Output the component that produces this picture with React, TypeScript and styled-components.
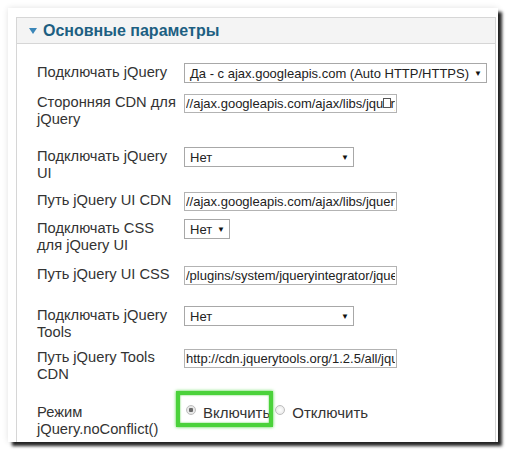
import styled, { createGlobalStyle } from 'styled-components'

const GlobalStyle = createGlobalStyle`
  body {
    margin: 0;
    background: #ffffff;
    font-family: 'Liberation Sans', Arial, sans-serif;
  }
`

interface Field {
  label: React.ReactNode
  height: number
  control: React.ReactNode
}

const fields: Field[] = [
  {
    label: 'Подключать jQuery',
    height: 30,
    control: <Select $width={303} value="Да - с ajax.googleapis.com (Auto HTTP/HTTPS)" />,
  },
  {
    label: (
      <>
        Сторонняя CDN для
        <br />
        jQuery
      </>
    ),
    height: 54,
    control: <TextInput value="//ajax.googleapis.com/ajax/libs/jquery/1.7/jquery.min.js" $marker />,
  },
  {
    label: (
      <>
        Подключать jQuery
        <br />
        UI
      </>
    ),
    height: 44,
    control: <Select $width={170} value="Нет" />,
  },
  {
    label: 'Путь jQuery UI CDN',
    height: 28,
    control: <TextInput value="//ajax.googleapis.com/ajax/libs/jqueryui/1.8/jquery-ui.min.js" />,
  },
  {
    label: (
      <>
        Подключать CSS
        <br />
        для jQuery UI
      </>
    ),
    height: 46,
    control: <Select $width={46} value="Нет" />,
  },
  {
    label: 'Путь jQuery UI CSS',
    height: 41,
    control: <TextInput value="/plugins/system/jqueryintegrator/jquery-ui.css" />,
  },
  {
    label: (
      <>
        Подключать jQuery
        <br />
        Tools
      </>
    ),
    height: 42,
    control: <Select $width={170} value="Нет" />,
  },
  {
    label: (
      <>
        Путь jQuery Tools
        <br />
        CDN
      </>
    ),
    height: 55,
    control: <TextInput value="http://cdn.jquerytools.org/1.2.5/all/jquery.tools.min.js" />,
  },
]

function Select(props: { value: string; $width: number }) {
  return (
    <SelectBox $width={props.$width}>
      <SelectText>{props.value}</SelectText>
      <Arrow>▼</Arrow>
    </SelectBox>
  )
}

function TextInput(props: { value: string; $marker?: boolean }) {
  return (
    <InputWrap>
      <Input readOnly value={props.value} />
      {props.$marker && <Marker />}
    </InputWrap>
  )
}

export default function App() {
  return (
    <>
      <GlobalStyle />
      <Page>
        <Shot>
          <Panel>
            <Header>
              <svg width="8" height="6" viewBox="0 0 8 6">
                <path d="M0 0 H8 L4 6 Z" fill="#3b86b8" />
              </svg>
              <Title>Основные параметры</Title>
            </Header>
            <Body>
              {fields.map((field, i) => (
                <Row key={i} $height={field.height}>
                  <Label>{field.label}</Label>
                  {field.control}
                </Row>
              ))}
              <Row $height={40}>
                <Label>
                  Режим
                  <br />
                  jQuery.noConflict()
                </Label>
                <RadioGroup>
                  <Option>
                    <Radio $checked />
                    <span>Включить</span>
                    <Highlight />
                  </Option>
                  <Option>
                    <Radio />
                    <span>Отключить</span>
                  </Option>
                </RadioGroup>
              </Row>
            </Body>
          </Panel>
        </Shot>
      </Page>
    </>
  )
}

const Page = styled.div`
  padding: 8px;
`
const Shot = styled.div`
  box-sizing: border-box;
  width: 490px;
  height: 434px;
  padding: 9px 2px 0 8px;
  background: #ffffff;
  overflow: hidden;
  box-shadow: 4px 4px 3px rgba(0, 0, 0, 0.85), 0 0 6px rgba(0, 0, 0, 0.12);
`
const Panel = styled.div`
  box-sizing: border-box;
  height: 432px;
  border: 1px solid #d6d6d6;
`
const Header = styled.div`
  display: flex;
  align-items: center;
  gap: 6px;
  height: 25px;
  padding-left: 12px;
  background: #f4f4f4;
  border-bottom: 1px solid #d6d6d6;
`
const Title = styled.h3`
  margin: 0;
  font-size: 16px;
  font-weight: bold;
  color: #1d5f82;
`
const Body = styled.div`
  display: flex;
  flex-direction: column;
  padding: 20px 0 0 20px;
`
const Row = styled.div<{ $height: number }>`
  display: flex;
  align-items: flex-start;
  min-height: ${(p) => p.$height}px;
`
const Label = styled.div`
  width: 147px;
  flex-shrink: 0;
  font-size: 14.7px;
  line-height: 17px;
  color: #333333;
`
const SelectBox = styled.div<{ $width: number }>`
  box-sizing: border-box;
  display: flex;
  align-items: center;
  justify-content: space-between;
  width: ${(p) => p.$width}px;
  height: 20px;
  margin-top: -1px;
  padding: 0 4px 0 5px;
  border: 1px solid #a8a8a8;
  background: #ffffff;
  font-size: 13px;
  color: #222222;
`
const SelectText = styled.span`
  white-space: nowrap;
`
const Arrow = styled.span`
  font-size: 8px;
  color: #111111;
`
const InputWrap = styled.div`
  position: relative;
  display: flex;
`
const Input = styled.input`
  box-sizing: border-box;
  width: 213px;
  height: 19px;
  margin: 0;
  padding: 0 1px;
  border: 1px solid #b3b3b3;
  font-family: 'Liberation Sans', Arial, sans-serif;
  font-size: 13px;
  color: #222222;
  outline: none;
`
const Marker = styled.span`
  position: absolute;
  right: 6px;
  top: 4px;
  width: 6px;
  height: 8px;
  border: 1px solid #555555;
  background: #ffffff;
`
const RadioGroup = styled.div`
  display: flex;
  align-items: center;
  gap: 5px;
  margin-left: 2px;
  font-size: 15px;
  line-height: 17px;
  color: #333333;
`
const Option = styled.label`
  position: relative;
  display: flex;
  align-items: center;
  gap: 7px;
`
const Radio = styled.span<{ $checked?: boolean }>`
  box-sizing: border-box;
  width: 10px;
  height: 10px;
  margin-top: -5px;
  border-radius: 50%;
  border: 1px solid #bdbdbd;
  background: ${(p) =>
    p.$checked
      ? 'radial-gradient(circle, #6a6a6a 0 2px, #e8e8e8 2.5px)'
      : 'radial-gradient(circle, #ffffff 0, #e4e4e4 100%)'};
`
const Highlight = styled.span`
  position: absolute;
  top: -13px;
  bottom: -6px;
  left: -10px;
  right: -3px;
  border: 4px solid #4bd23b;
  box-shadow: 0 0 3px #4bd23b, inset 0 0 2px #4bd23b;
  pointer-events: none;
`
